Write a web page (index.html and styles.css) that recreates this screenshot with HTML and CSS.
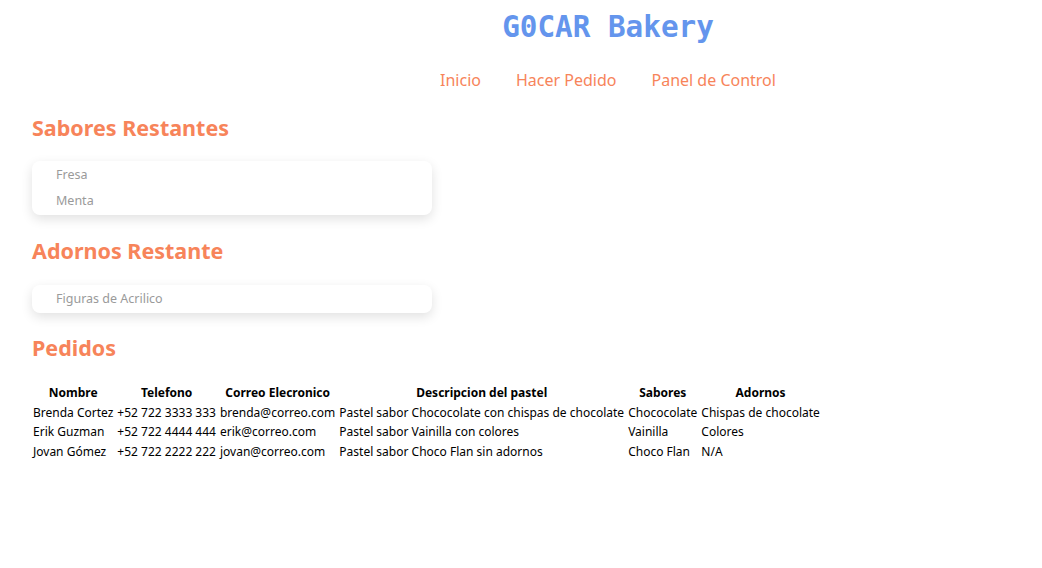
FILE: index.html
```html
<!DOCTYPE html>
<html lang="es">
<head>
<meta charset="utf-8">
<title>G0CAR Bakery</title>
<link rel="stylesheet" href="styles.css">
</head>
<body>
<header class="site-header">
  <h1 class="brand">G0CAR Bakery</h1>
  <nav class="nav">
    <a href="#" class="nav-link">Inicio</a>
    <a href="#" class="nav-link">Hacer Pedido</a>
    <a href="#" class="nav-link">Panel de Control</a>
  </nav>
</header>
<main class="content">
  <h2 class="section-title section-first">Sabores Restantes</h2>
  <ul class="card-list">
    <li>Fresa</li>
    <li>Menta</li>
  </ul>
  <h2 class="section-title">Adornos Restante</h2>
  <ul class="card-list card-second">
    <li>Figuras de Acrilico</li>
  </ul>
  <h2 class="section-title">Pedidos</h2>
  <table class="orders">
    <thead>
      <tr>
        <th>Nombre</th>
        <th>Telefono</th>
        <th>Correo Elecronico</th>
        <th>Descripcion del pastel</th>
        <th>Sabores</th>
        <th>Adornos</th>
      </tr>
    </thead>
    <tbody>
      <tr>
        <td>Brenda Cortez</td>
        <td>+52 722 3333 333</td>
        <td>brenda@correo.com</td>
        <td>Pastel sabor Chococolate con chispas de chocolate</td>
        <td>Chococolate</td>
        <td>Chispas de chocolate</td>
      </tr>
      <tr>
        <td>Erik Guzman</td>
        <td>+52 722 4444 444</td>
        <td>erik@correo.com</td>
        <td>Pastel sabor Vainilla con colores</td>
        <td>Vainilla</td>
        <td>Colores</td>
      </tr>
      <tr>
        <td>Jovan Gómez</td>
        <td>+52 722 2222 222</td>
        <td>jovan@correo.com</td>
        <td>Pastel sabor Choco Flan sin adornos</td>
        <td>Choco Flan</td>
        <td>N/A</td>
      </tr>
    </tbody>
  </table>
</main>
</body>
</html>
```
FILE: styles.css
```css
html, body {
  margin: 0;
  padding: 0;
  background: #ffffff;
}
body {
  font-family: "Noto Sans", "Open Sans", sans-serif;
  color: #000;
}
.site-header {
  padding-left: 174px;
  text-align: center;
}
.brand {
  margin: 0;
  padding-top: 9px;
  font-family: "DejaVu Sans Mono", "Liberation Mono", monospace;
  font-weight: bold;
  font-size: 29.3px;
  line-height: 36px;
  color: #6495ed;
}
.nav {
  display: flex;
  justify-content: center;
  gap: 35px;
  margin-top: 23px;
}
.nav-link {
  color: #f7845a;
  text-decoration: none;
  font-size: 16px;
  line-height: 24px;
}
.content {
  padding: 0 32px;
}
.section-title {
  margin: 0;
  color: #f7845a;
  font-size: 21.5px;
  font-weight: bold;
  line-height: 28px;
}
.section-first {
  margin-top: 22px;
}
.card-list {
  list-style: none;
  width: 400px;
  margin: 19px 0 22px;
  padding: 1px 0 1px 24px;
  box-sizing: border-box;
  background: #fff;
  border-radius: 8px;
  box-shadow: 0 4px 12px rgba(0, 0, 0, 0.12);
}
.card-list li {
  color: #9a9a9a;
  font-size: 12.5px;
  line-height: 26px;
}
.card-second {
  margin-top: 20px;
  margin-bottom: 21px;
}
.orders {
  margin-top: 20px;
  margin-left: -2px;
  font-size: 12px;
  border-spacing: 2px;
}
.orders th {
  font-weight: bold;
  padding: 1px;
  line-height: 15.5px;
}
.orders td {
  padding: 1px;
  line-height: 15.5px;
  white-space: nowrap;
}
```
